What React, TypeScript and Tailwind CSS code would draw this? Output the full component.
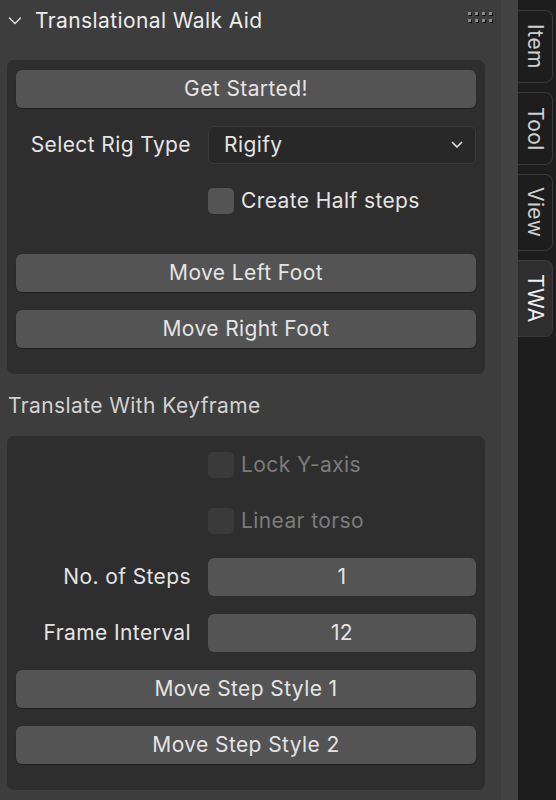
import React from 'react';

const font = { fontFamily: 'Inter, "Noto Sans", sans-serif', letterSpacing: '0.4px' };

const Btn = ({ label }: { label: string }) => (
  <button className="h-[38px] w-full rounded-[6px] bg-[#545454] text-[21px] text-[#e4e4e4] shadow-[0_1px_1px_rgba(0,0,0,0.35)]">
    {label}
  </button>
);

const Check = ({ label, disabled }: { label: string; disabled?: boolean }) => (
  <div className="grid h-[38px] grid-cols-[192px_1fr] items-center">
    <div />
    <div className="flex items-center gap-[7px]">
      <span
        className={
          disabled
            ? 'h-[26px] w-[26px] rounded-[5px] bg-[#3a3a3a]'
            : 'h-[26px] w-[26px] rounded-[5px] bg-[#545454]'
        }
      />
      <span className={disabled ? 'text-[21px] text-[#7c7c7c]' : 'text-[21px] text-[#e4e4e4]'}>{label}</span>
    </div>
  </div>
);

const Field = ({ label, children }: { label: string; children: React.ReactNode }) => (
  <div className="grid h-[38px] grid-cols-[192px_1fr] items-center">
    <span className="pr-[17px] text-right text-[21px] text-[#e4e4e4]">{label}</span>
    {children}
  </div>
);

const Tab = ({ label, active, h }: { label: string; active?: boolean; h: string }) => (
  <div
    className={
      (active ? 'bg-[#2e2e2e] text-[#f0f0f0] ' : 'bg-[#1d1d1d] text-[#cfcfcf] ') +
      h +
      ' flex w-[35px] items-center justify-center rounded-r-[8px] border border-l-0 border-[#3a3a3a] text-[21px] [writing-mode:vertical-rl]'
    }
  >
    {label}
  </div>
);

export default function App() {
  return (
    <div className="flex h-[800px] w-[556px] overflow-hidden bg-[#3d3d3d]" style={font}>
      <div className="flex w-[501px] flex-col">
        {/* panel header */}
        <div className="flex h-[42px] items-center pl-[8px] pr-[9px]">
          <svg width="14" height="10" viewBox="0 0 14 10" className="mr-[13px]">
            <path d="M1.5 2 L7 7.5 L12.5 2" fill="none" stroke="#d6d6d6" strokeWidth="1.6" strokeLinecap="round" strokeLinejoin="round" />
          </svg>
          <span className="text-[21px] text-[#ececec]">Translational Walk Aid</span>
          <div className="ml-auto grid -translate-y-[4px] grid-cols-4 gap-x-[4px] gap-y-[4px]">
            {Array.from({ length: 8 }).map((_, i) => (
              <span key={i} className="h-[3px] w-[3px] bg-[#8a8a8a] shadow-[1px_1px_0_#111]" />
            ))}
          </div>
        </div>

        {/* box 1 */}
        <div className="mx-[7px] mt-[18px] flex w-[478px] flex-col rounded-[7px] bg-[#2e2e2e] px-[9px] pb-[26px] pt-[10px]">
          <Btn label="Get Started!" />
          <div className="mt-[18px]">
            <Field label="Select Rig Type">
              <div className="flex h-[38px] items-center rounded-[6px] border border-[#3b3b3b] bg-[#282828] pl-[15px] pr-[12px] text-[21px] text-[#e4e4e4]">
                <span>Rigify</span>
                <svg width="12" height="8" viewBox="0 0 12 8" className="ml-auto">
                  <path d="M1.5 1.5 L6 6 L10.5 1.5" fill="none" stroke="#e0e0e0" strokeWidth="1.7" strokeLinecap="round" strokeLinejoin="round" />
                </svg>
              </div>
            </Field>
          </div>
          <div className="mt-[18px]">
            <Check label="Create Half steps" />
          </div>
          <div className="mt-[34px]">
            <Btn label="Move Left Foot" />
          </div>
          <div className="mt-[18px]">
            <Btn label="Move Right Foot" />
          </div>
        </div>

        <div className="flex h-[62px] items-center pl-[8px] pt-[2px] text-[21px] text-[#d2d2d2]">Translate With Keyframe</div>

        {/* box 2 */}
        <div className="mx-[7px] flex w-[478px] flex-col gap-[18px] rounded-[7px] bg-[#2e2e2e] px-[9px] pb-[26px] pt-[10px]">
          <Check label="Lock Y-axis" disabled />
          <Check label="Linear torso" disabled />
          <Field label="No. of Steps">
            <div className="flex h-[38px] items-center justify-center rounded-[6px] bg-[#545454] text-[21px] text-[#e4e4e4]">1</div>
          </Field>
          <Field label="Frame Interval">
            <div className="flex h-[38px] items-center justify-center rounded-[6px] bg-[#545454] text-[21px] text-[#e4e4e4]">12</div>
          </Field>
          <Btn label="Move Step Style 1" />
          <Btn label="Move Step Style 2" />
        </div>
      </div>

      {/* scroll strip */}
      <div className="w-[17px] bg-[#434343]" />

      {/* tabs */}
      <div className="flex w-[38px] flex-col gap-[9px] bg-[#1d1d1d] pt-[10px]">
        <Tab label="Item" h="h-[73px]" />
        <Tab label="Tool" h="h-[73px]" />
        <Tab label="View" h="h-[77px]" />
        <Tab label="TWA" active h="h-[77px]" />
      </div>
    </div>
  );
}
